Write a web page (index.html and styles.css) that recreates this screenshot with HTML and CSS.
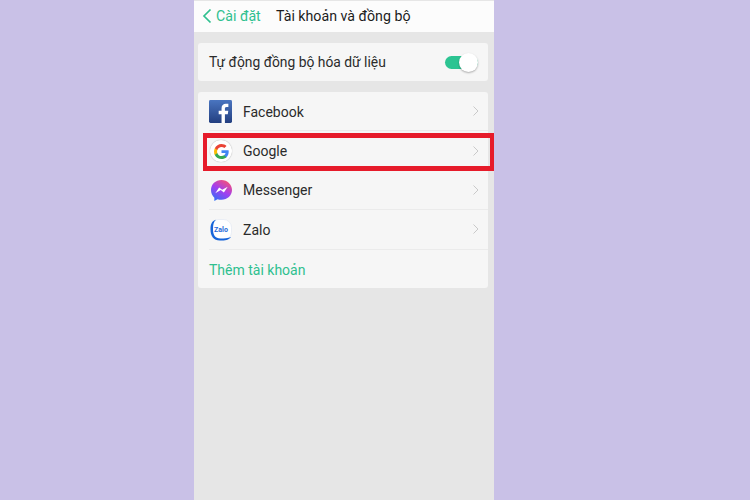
FILE: index.html
```html
<!DOCTYPE html>
<html lang="vi">
<head>
<meta charset="utf-8">
<title>Tài khoản và đồng bộ</title>
<link rel="stylesheet" href="styles.css">
</head>
<body>
<main class="phone">
  <header class="topbar">
    <div class="back">
      <svg class="back-icon" viewBox="0 0 10 16" width="10" height="16"><path d="M8.500 1.500 2 8l6.500 6.500" fill="none" stroke="#2fc08f" stroke-width="1.700"/></svg>
      <span>Cài đặt</span>
    </div>
    <h1 class="title">Tài khoản và đồng bộ</h1>
  </header>
  <section class="card sync">
    <span class="label">Tự động đồng bộ hóa dữ liệu</span>
    <span class="switch"><span class="knob"></span></span>
  </section>
  <section class="card list">
    <div class="row">
      <svg class="app fb" viewBox="0 0 24 24" width="23" height="23">
        <defs><linearGradient id="fb" x1="0" y1="0" x2="0" y2="1"><stop offset="0" stop-color="#4a75c0"/><stop offset="1" stop-color="#233f80"/></linearGradient></defs>
        <rect width="24" height="24" rx="1.500" fill="url(#fb)"/>
        <path d="M16.600 24v-9.200h3l.5-3.600h-3.500V9c0-1 .3-1.800 1.800-1.800h1.800V4c-.4 0-1.400-.1-2.600-.1-2.700 0-4.500 1.600-4.500 4.600v2.700h-3v3.600h3V24z" fill="#fff"/>
      </svg>
      <span class="name">Facebook</span>
      <svg class="chev" viewBox="0 0 6 10" width="6" height="10"><path d="M.5.500 5 5 .5 9.500" fill="none" stroke="#c9c9c9"/></svg>
    </div>
    <div class="row google">
      <span class="g-badge">
        <svg viewBox="0 0 24 24" width="15" height="15">
          <path d="M23.500 12.300c0-.8-.1-1.600-.2-2.400H12v4.500h6.500c-.3 1.500-1.100 2.800-2.400 3.600v3h3.900c2.300-2.100 3.500-5.200 3.500-8.700z" fill="#4285f4"/>
          <path d="M12 24c3.200 0 6-1.100 8-2.900l-3.900-3c-1.100.7-2.500 1.200-4.100 1.200-3.100 0-5.800-2.100-6.700-5H1.300v3.100C3.300 21.300 7.300 24 12 24z" fill="#34a853"/>
          <path d="M5.300 14.300c-.5-1.500-.5-3.100 0-4.600V6.600h-4c-1.700 3.400-1.700 7.400 0 10.800z" fill="#fbbc05"/>
          <path d="M12 4.700c1.800 0 3.300.6 4.600 1.800l3.400-3.400C17.900 1.100 15.100 0 12 0 7.300 0 3.300 2.700 1.300 6.600l4 3.100c.9-2.900 3.600-5 6.700-5z" fill="#ea4335"/>
        </svg>
      </span>
      <span class="name">Google</span>
      <svg class="chev" viewBox="0 0 6 10" width="6" height="10"><path d="M.5.500 5 5 .5 9.500" fill="none" stroke="#c9c9c9"/></svg>
      <span class="highlight"></span>
    </div>
    <div class="row">
      <svg class="app ms" viewBox="1 1 22 22" width="21" height="21">
        <defs><linearGradient id="ms" x1=".2" y1="1" x2=".8" y2="0"><stop offset="0" stop-color="#2f6ff6"/><stop offset=".5" stop-color="#a23ff0"/><stop offset="1" stop-color="#fb5070"/></linearGradient></defs>
        <path d="M12 1C5.800 1 1 5.500 1 11.600c0 3.200 1.300 6 3.500 7.900V23l3.300-1.800c1.300.4 2.700.6 4.200.6 6.200 0 11-4.500 11-10.200S18.200 1 12 1z" fill="url(#ms)"/>
        <path d="m5.500 14.800 4-6 3.300 2.500 5.700-3.200-4 6-3.300-2.500z" fill="#fff"/>
      </svg>
      <span class="name">Messenger</span>
      <svg class="chev" viewBox="0 0 6 10" width="6" height="10"><path d="M.5.500 5 5 .5 9.500" fill="none" stroke="#c9c9c9"/></svg>
    </div>
    <div class="row">
      <span class="zalo">
        <svg class="zalo-shape" viewBox="0 0 22 22" width="22" height="22">
          <rect x=".5" y=".5" width="21" height="20.500" rx="8" fill="#fff" stroke="#dfe6f2" stroke-width=".6"/>
          <path d="M6 .8C2 1.800.5 5 .5 10.500c0 6.500 3 11 9.500 11 5 0 9-.5 11-3.500-3 1.500-7 1.500-10.500 1.500C5 19.500 3 15.500 3 10.500 3 6 3.500 3 6 .8z" fill="#1664d9"/>
        </svg>
        <span class="zalo-text">Zalo</span>
      </span>
      <span class="name">Zalo</span>
      <svg class="chev" viewBox="0 0 6 10" width="6" height="10"><path d="M.5.500 5 5 .5 9.500" fill="none" stroke="#c9c9c9"/></svg>
    </div>
    <div class="row add">Thêm tài khoản</div>
  </section>
</main>
</body>
</html>
```
FILE: styles.css
```css
* { box-sizing: border-box; }
html, body { margin: 0; height: 100%; }
body {
  background: #c9c1e7;
  font-family: Roboto, "Noto Sans", sans-serif;
  overflow: hidden;
}
.phone {
  width: 300px;
  height: 500px;
  margin-left: 194px;
  padding-top: 1px;
  background: #e6e6e6;
  display: flex;
  flex-direction: column;
  color: #2b2b2b;
}
.topbar {
  height: 31px;
  flex: none;
  background: #fcfcfc;
  display: flex;
  align-items: center;
  padding: 0 0 2px 8px;
}
.back {
  display: flex;
  align-items: center;
  gap: 4px;
  width: 74px;
  color: #2fc08f;
  font-size: 14.200px;
}
.title {
  margin: 0;
  font-size: 14.200px;
  font-weight: 400;
  color: #1d1d1d;
}
.card {
  margin: 0 6px 0 4px;
  background: #f6f6f6;
  border-radius: 3px;
}
.sync {
  margin-top: 11px;
  height: 38px;
  display: flex;
  align-items: center;
  justify-content: space-between;
  padding: 0 10px 0 11px;
  font-size: 13.850px;
  line-height: 16px;
}
.switch {
  position: relative;
  width: 33px;
  height: 13px;
  border-radius: 7px;
  background: #2cc492;
}
.knob {
  position: absolute;
  right: 0;
  top: -3px;
  width: 19px;
  height: 19px;
  border-radius: 50%;
  background: #fff;
  box-shadow: 0 1px 2px rgba(0,0,0,.3);
}
.list {
  margin-top: 11px;
  height: 196px;
  display: flex;
  flex-direction: column;
}
.row {
  position: relative;
  flex: 0 0 39.400px;
  display: flex;
  align-items: center;
  margin-left: 11px;
  padding: 1px 9px 0 0;
  font-size: 14px;
  border-bottom: 1px solid #ebebeb;
}
.row:last-child { border-bottom: 0; }
.app { flex: none; }
.fb { margin-right: 11px; }
.ms { margin: 0 11px 0 2px; }
.name { flex: 1; }
.chev { flex: none; margin-top: -1px; }
.g-badge {
  flex: none;
  width: 22px;
  height: 22px;
  margin: 0 11px 0 1px;
  border-radius: 50%;
  display: flex;
  align-items: center;
  justify-content: center;
  background: #fff;
  box-shadow: 0 0 1px rgba(0,0,0,.4);
}
.zalo {
  position: relative;
  flex: none;
  width: 22px;
  height: 22px;
  margin: 0 11px 0 1px;
  display: flex;
  align-items: center;
  justify-content: center;
}
.zalo-shape { position: absolute; left: 0; top: 0; }
.zalo-text {
  position: relative;
  font-size: 7px;
  font-weight: 700;
  color: #1f69d8;
}
.highlight {
  position: absolute;
  left: -6px;
  right: -6px;
  top: 2px;
  bottom: -1px;
  border: 5px solid #e61b2a;
  border-left-width: 4px;
  border-right-width: 4px;
}
.add { color: #2fc08f; padding-top: 2px; }
```
